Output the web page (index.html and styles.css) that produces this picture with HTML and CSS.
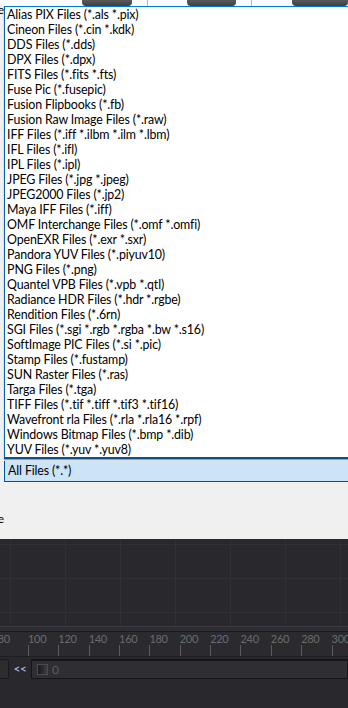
FILE: index.html
```html
<!DOCTYPE html>
<html lang="en">
<head>
  <meta charset="UTF-8">
  <meta name="viewport" content="width=device-width, initial-scale=1.0">
  <title>Loader - File Type</title>
  <link rel="stylesheet" href="styles.css">
</head>
<body>
  <div class="dialog">
    <div class="toolbar">
      <span class="pill p1"></span>
      <span class="vline"></span>
      <span class="pill p2"></span>
      <span class="vline"></span>
      <span class="pill p3"></span>
    </div>
    <div class="form">
      <div class="labels">
        <span class="label first">Name</span>
        <span class="label last">Type</span>
      </div>
      <div class="picker">
        <ul class="list">
          <li>Alias PIX Files (*.als *.pix)</li>
          <li>Cineon Files (*.cin *.kdk)</li>
          <li>DDS Files (*.dds)</li>
          <li>DPX Files (*.dpx)</li>
          <li>FITS Files (*.fits *.fts)</li>
          <li>Fuse Pic (*.fusepic)</li>
          <li>Fusion Flipbooks (*.fb)</li>
          <li>Fusion Raw Image Files (*.raw)</li>
          <li>IFF Files (*.iff *.ilbm *.ilm *.lbm)</li>
          <li>IFL Files (*.ifl)</li>
          <li>IPL Files (*.ipl)</li>
          <li>JPEG Files (*.jpg *.jpeg)</li>
          <li>JPEG2000 Files (*.jp2)</li>
          <li>Maya IFF Files (*.iff)</li>
          <li>OMF Interchange Files (*.omf *.omfi)</li>
          <li>OpenEXR Files (*.exr *.sxr)</li>
          <li>Pandora YUV Files (*.piyuv10)</li>
          <li>PNG Files (*.png)</li>
          <li>Quantel VPB Files (*.vpb *.qtl)</li>
          <li>Radiance HDR Files (*.hdr *.rgbe)</li>
          <li>Rendition Files (*.6rn)</li>
          <li>SGI Files (*.sgi *.rgb *.rgba *.bw *.s16)</li>
          <li>SoftImage PIC Files (*.si *.pic)</li>
          <li>Stamp Files (*.fustamp)</li>
          <li>SUN Raster Files (*.ras)</li>
          <li>Targa Files (*.tga)</li>
          <li>TIFF Files (*.tif *.tiff *.tif3 *.tif16)</li>
          <li>Wavefront rla Files (*.rla *.rla16 *.rpf)</li>
          <li>Windows Bitmap Files (*.bmp *.dib)</li>
          <li>YUV Files (*.yuv *.yuv8)</li>
        </ul>
        <div class="combo">All Files (*.*)</div>
      </div>
    </div>
  </div>

  <div class="flow">
    <div class="grid"></div>
    <div class="splitter"></div>
    <div class="ruler">
      <div class="mark"><span>80</span></div>
      <div class="mark"><span>100</span></div>
      <div class="mark"><span>120</span></div>
      <div class="mark"><span>140</span></div>
      <div class="mark"><span>160</span></div>
      <div class="mark"><span>180</span></div>
      <div class="mark"><span>200</span></div>
      <div class="mark"><span>220</span></div>
      <div class="mark"><span>240</span></div>
      <div class="mark"><span>260</span></div>
      <div class="mark"><span>280</span></div>
      <div class="mark"><span>300</span></div>
    </div>
    <div class="controls">
      <div class="stub"></div>
      <span class="rewind">&lt;&lt;</span>
      <div class="field">
        <span class="swatch"></span>
        <span class="value">0</span>
      </div>
    </div>
  </div>
</body>
</html>
```

FILE: styles.css
```css
* {
  margin: 0;
  padding: 0;
  box-sizing: border-box;
}

body {
  width: 348px;
  height: 708px;
  overflow: hidden;
  background-color: #28282d;
  font-family: Lato, "Noto Sans", sans-serif;
}

/* light dialog part */
.dialog {
  background: #f0f0f0;
  height: 539px;
}

.toolbar {
  display: flex;
  height: 6px;
  background: #fbfbfb;
}

.pill {
  height: 6px;
  background: linear-gradient(to bottom, #5a5a5a, #3e3e3e);
  border-radius: 0 0 4px 4px;
}

.p1 { margin-left: 82px; width: 53px; }
.p2 { margin-left: 40px; width: 52px; }
.p3 { margin-left: 40px; width: 60px; }

.vline {
  width: 1px;
  margin-left: 15px;
  background: #bdbdbd;
}

.form {
  display: flex;
}

.labels {
  width: 5px;
  overflow: hidden;
  display: flex;
  flex-direction: column;
  align-items: flex-end;
  font-size: 12px;
  line-height: 12px;
  color: #000;
}

.label {
  white-space: nowrap;
}

.label.first { margin-top: -2px; }
.label.last { margin-top: 497px; }

.picker {
  width: 420px;
}

.list {
  list-style: none;
  background: #fff;
  border-top: 1px solid #0078d7;
  border-left: 1px solid #0a64b4;
  border-bottom: 2px solid #0b4f8c;
  box-shadow: 0 1px 1px rgba(0, 0, 0, 0.35);
}

.list li {
  height: 15px;
  line-height: 15px;
  padding-left: 2px;
  font-size: 12.4px;
  letter-spacing: -0.15px;
  color: #000;
  white-space: nowrap;
}

.combo {
  margin-top: 2px;
  height: 21px;
  line-height: 19px;
  padding-left: 3px;
  font-size: 12.4px;
  letter-spacing: -0.15px;
  color: #000;
  background: #cce4f7;
  border-left: 1px solid #005499;
  border-bottom: 1px solid #005499;
}

/* dark flow part */
.flow {
  background: #28282d;
}

.grid {
  height: 87px;
  background-color: #28282d;
  background-image:
    linear-gradient(to right, #303036 1px, transparent 1px),
    linear-gradient(to bottom, #303036 1px, transparent 1px);
  background-size: 55px 34px;
  background-position: 10px 5px;
}

.splitter {
  height: 6px;
  background: #2d2d33;
  border-top: 1px solid #3a3a40;
  border-bottom: 1px solid #1b1b1f;
}

.ruler {
  display: flex;
  height: 25px;
  margin-left: -2.4px;
  background: #2a2a2f;
  border-bottom: 1px solid #1e1e22;
  overflow: hidden;
}

.mark {
  flex: 0 0 30.36px;
  height: 100%;
  display: flex;
  flex-direction: column;
  align-items: flex-start;
}

.mark span {
  font-size: 11px;
  line-height: 11px;
  margin-top: 1px;
  color: #6a6a6e;
  letter-spacing: -0.3px;
}

.mark::after {
  content: "";
  width: 1px;
  height: 12px;
  margin-top: 1px;
  background: #5c5c60;
}

.controls {
  display: flex;
  align-items: flex-start;
  height: 26px;
  padding-top: 2px;
}

.stub {
  width: 9px;
  height: 20px;
  background: #2c2c31;
  border: 1px solid #1a1a1e;
  border-left: none;
  border-radius: 0 3px 3px 0;
}

.rewind {
  width: 22px;
  text-align: center;
  font-size: 12px;
  line-height: 20px;
  letter-spacing: -0.5px;
  color: #b4c8e4;
}

.field {
  flex: 1;
  display: flex;
  align-items: center;
  height: 20px;
  background: #2e2e33;
  border: 1px solid #151518;
  border-top-width: 2px;
  padding-left: 5px;
}

.swatch {
  width: 11px;
  height: 11px;
  background: linear-gradient(to right, #1a1a1e, #3c3c42);
  border: 1px solid #4a4a50;
}

.value {
  margin-left: 4px;
  font-size: 12px;
  color: #5e5e63;
}
```
